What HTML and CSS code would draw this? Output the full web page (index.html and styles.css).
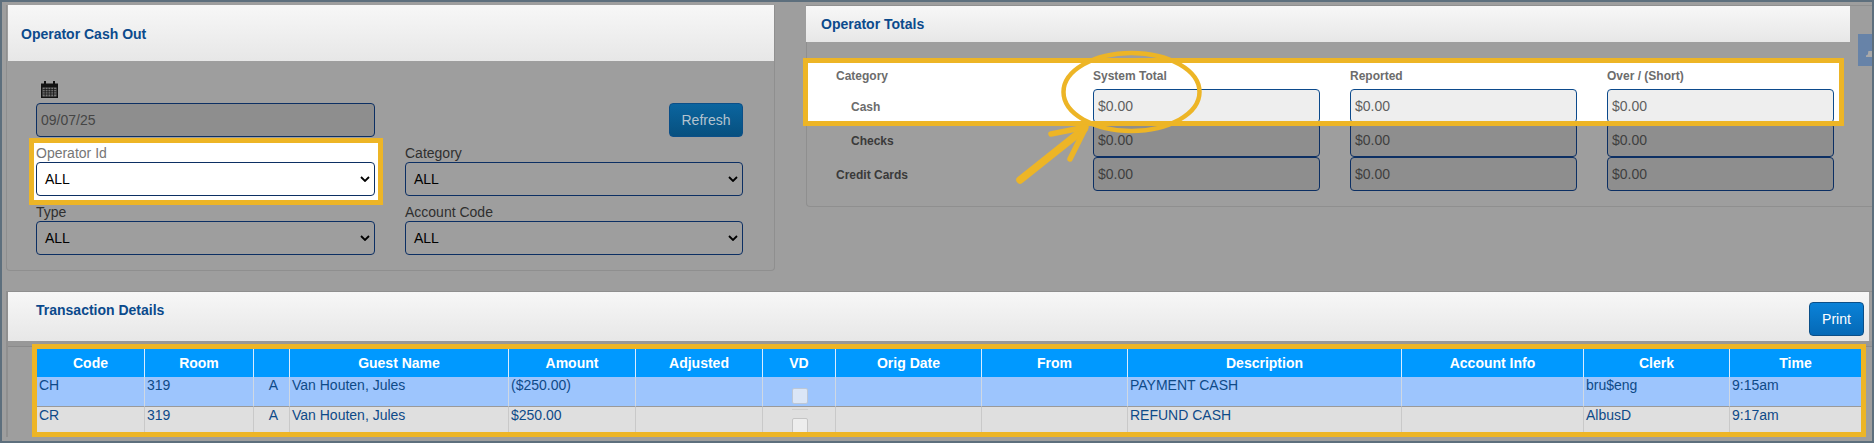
FILE: index.html
```html
<!DOCTYPE html>
<html lang="en">
<head>
<meta charset="utf-8">
<title>Operator Cash Out</title>
<link rel="stylesheet" href="styles.css">
</head>
<body>
<main class="frame">
  <div class="top-row">
    <section class="panel cash-panel">
      <header class="panel-head cash-head"><h2>Operator Cash Out</h2></header>
      <div class="cash-body">
        <div class="date-row">
          <div class="date-field">
            <svg class="cal" viewBox="0 0 17 17" aria-hidden="true">
              <path d="M0 2.5h3V0h2v2.5h7V0h2v2.5h3V17H0z" fill="#111"/>
              <path d="M1.5 6.5h14v9h-14z" fill="#777"/>
              <path d="M1.5 8.6h14M1.5 10.8h14M1.5 13h14M4.2 6.5v9M7 6.5v9M9.8 6.5v9M12.6 6.5v9" stroke="#111" stroke-width=".8" fill="none"/>
            </svg>
            <div class="field-box dim">09/07/25</div>
          </div>
          <button class="btn refresh" type="button">Refresh</button>
        </div>
        <div class="form-grid">
          <div class="field lit"><label>Operator Id</label><div class="select lit-select"><span>ALL</span><svg class="chev" viewBox="0 0 10 6"><path d="M1 1l4 4 4-4" fill="none" stroke="#000" stroke-width="1.8"/></svg></div></div>
          <div class="field"><label>Category</label><div class="select"><span>ALL</span><svg class="chev" viewBox="0 0 10 6"><path d="M1 1l4 4 4-4" fill="none" stroke="#000" stroke-width="1.8"/></svg></div></div>
          <div class="field"><label>Type</label><div class="select"><span>ALL</span><svg class="chev" viewBox="0 0 10 6"><path d="M1 1l4 4 4-4" fill="none" stroke="#000" stroke-width="1.8"/></svg></div></div>
          <div class="field"><label>Account Code</label><div class="select"><span>ALL</span><svg class="chev" viewBox="0 0 10 6"><path d="M1 1l4 4 4-4" fill="none" stroke="#000" stroke-width="1.8"/></svg></div></div>
        </div>
      </div>
    </section>

    <section class="panel totals-panel">
      <header class="panel-head totals-head"><h2>Operator Totals</h2></header>
      <div class="totals-body">
        <div class="totals-lit">
          <div class="t-row t-heads"><b class="t-cat">Category</b><b>System Total</b><b>Reported</b><b>Over / (Short)</b></div>
          <div class="t-row"><b class="t-cat t-sub">Cash</b><div class="t-input on">$0.00</div><div class="t-input on">$0.00</div><div class="t-input on">$0.00</div></div>
        </div>
        <div class="t-row dimrow"><b class="t-cat t-sub">Checks</b><div class="t-input">$0.00</div><div class="t-input">$0.00</div><div class="t-input">$0.00</div></div>
        <div class="t-row dimrow"><b class="t-cat">Credit Cards</b><div class="t-input">$0.00</div><div class="t-input">$0.00</div><div class="t-input">$0.00</div></div>
      </div>
    </section>
    <div class="side-dot"></div>
    <div class="side-tab"></div>
  </div>

  <section class="details">
    <header class="panel-head details-head">
      <h2>Transaction Details</h2>
      <button class="btn print" type="button">Print</button>
    </header>
    <div class="table-zone">
      <div class="table-clip">
        <table class="tx">
          <colgroup>
            <col class="c1"><col class="c2"><col class="c3"><col class="c4"><col class="c5"><col class="c6"><col class="c7"><col class="c8"><col class="c9"><col class="c10"><col class="c11"><col class="c12"><col class="c13">
          </colgroup>
          <thead>
            <tr><th>Code</th><th>Room</th><th></th><th>Guest Name</th><th>Amount</th><th>Adjusted</th><th>VD</th><th>Orig Date</th><th>From</th><th>Description</th><th>Account Info</th><th>Clerk</th><th>Time</th></tr>
          </thead>
          <tbody>
            <tr class="r1"><td>CH</td><td>319</td><td class="ctr">A</td><td>Van Houten, Jules</td><td>($250.00)</td><td></td><td class="vd"><i class="bar"></i><i class="chk"></i></td><td></td><td></td><td>PAYMENT CASH</td><td></td><td>bru$eng</td><td>9:15am</td></tr>
            <tr class="r2"><td>CR</td><td>319</td><td class="ctr">A</td><td>Van Houten, Jules</td><td>$250.00</td><td></td><td class="vd"><i class="bar"></i><i class="chk"></i></td><td></td><td></td><td>REFUND CASH</td><td></td><td>AlbusD</td><td>9:17am</td></tr>
          </tbody>
        </table>
      </div>
    </div>
  </section>

  <svg class="callout" viewBox="0 0 220 160" aria-hidden="true">
    <ellipse cx="131.5" cy="52" rx="68" ry="39" fill="none" stroke="#edb526" stroke-width="4.5"/>
    <path d="M20 140L84 89" fill="none" stroke="#edb526" stroke-width="7.5" stroke-linecap="round"/>
    <path d="M51 94L86 87 70 119" fill="none" stroke="#edb526" stroke-width="5.5" stroke-linecap="round" stroke-linejoin="round"/>
  </svg>
</main>
</body>
</html>
```
FILE: styles.css
```css
* { box-sizing: border-box; }
html, body { margin: 0; height: 100%; overflow: hidden; }
body { background: #9e9e9e; font-family: "Liberation Sans", Arial, sans-serif; color: #3a3a3a; }
h2 { margin: 0; font-size: 14px; line-height: 16px; font-weight: 700; color: #0b4a8c; }

.frame {
  position: relative;
  height: 443px;
  border: 2px solid #5d6f7d;
  overflow: hidden;
}
.top-row { display: flex; height: 289px; position: relative; }

.panel { background: #9e9e9e; border: 1px solid #8f8f8f; border-radius: 0 0 4px 4px; }
.panel-head { background: linear-gradient(#f7f7f7, #e7e7e7); }

.cash-panel { flex: none; width: 769px; height: 266px; margin: 3px 0 0 4px; border-top: 0; }
.cash-head { height: 56px; padding: 21px 12px 0 13px; margin-left: 1px; }
.cash-body { padding: 20px 31px 0 29px; }
.date-row { display: flex; justify-content: space-between; align-items: flex-end; }
.date-field { width: 339px; }
.cal { display: block; width: 17px; height: 17px; margin: 0 0 5px 5px; }
.field-box {
  height: 34px; border: 1px solid #0c2f63; border-radius: 4px;
  display: flex; align-items: center; padding-left: 4px; font-size: 14px;
}
.dim { background: #8e8e8e; color: #454545; }
.btn { border: 1px solid #0b4f88; border-radius: 4px; font: 14px "Liberation Sans", Arial, sans-serif; padding: 0; }
.refresh { width: 74px; height: 34px; background: linear-gradient(#0b659f, #07507f); color: #b4c3cf; }

.form-grid { display: grid; grid-template-columns: 339px 338px; column-gap: 30px; }
.field { height: 59px; padding-top: 5px; }
.field label { display: block; font-size: 14px; height: 20px; line-height: 22px; color: #2f2f2f; }
.field.lit {
  position: relative; background: #fff; outline: 5px solid #edb526;
  margin: 6px -3px -4px -2px; padding: 0 3px 0 2px; height: 57px;
}
.field.lit label { color: #767676; height: 19px; line-height: 21px; }
.select {
  height: 34px; border: 1px solid #0c2f63; border-radius: 4px; display: flex; align-items: center;
  justify-content: space-between; padding: 0 4px 0 8px; font-size: 14px; color: #000;
}
.lit-select { background: #fff; }
.chev { width: 10px; height: 6px; }

.totals-panel { flex: 1; height: 202px; margin: 3px 0 0 31px; border-right: 0; border-radius: 0 0 0 4px; }
.totals-head { height: 36px; padding: 10px 15px 0; width: 1044px; margin-left: -1px; }
.totals-body { padding-top: 21px; }
.totals-lit {
  position: relative; z-index: 1; height: 58px; margin: 0 0 2px 1px; width: 1031px; background: #fff;
  outline: 5px solid #edb526;
}
.t-row { display: grid; grid-template-columns: 255px 227px 227px 227px; column-gap: 30px; height: 34px; }
.t-row b { font-size: 12px; align-self: center; padding-top: 2px; }
.t-heads { height: 25px; align-items: center; color: #6c6c6c; margin-bottom: 1px; }
.t-heads b { padding-top: 0; }
.t-cat { padding-left: 28px; color: #6c6c6c; }
.t-row .t-sub { padding-left: 43px; }
.dimrow { margin-left: 1px; }
.dimrow .t-cat { color: #3a3a3a; }
.t-input {
  height: 34px; border: 1px solid #0c2f63; border-radius: 4px; background: #8e8e8e;
  display: flex; align-items: center; padding-left: 4px; font-size: 14px; color: #3f3f3f;
}
.t-input.on { background: #eee; color: #5f5f5f; border-color: #0c4a8c; }

.side-dot { position: absolute; left: 1865px; top: 24px; width: 48px; height: 48px; border-radius: 50%; background: #123b6b; }
.side-tab { position: absolute; right: 0; top: 32px; width: 14px; height: 32px; background: #6783a8; }
.side-tab::after {
  content: ""; position: absolute; right: 0; bottom: 9px; width: 6px; height: 6px;
  background: #a9a9a9; clip-path: polygon(40% 0, 100% 0, 100% 100%, 0 100%, 0 75%, 30% 60%);
}

.details { margin-left: 4px; border-top: 1px solid #8f8f8f; border-left: 2px solid #8f8f8f; }
.details-head {
  height: 49px; width: 1861px; padding: 10px 5px 0 28px;
  display: flex; justify-content: space-between; align-items: flex-start;
}
.print { width: 55px; height: 34px; background: linear-gradient(#0a82d8, #0569b6); color: #fff; }
.table-zone { padding-top: 3px; background: linear-gradient(#989898 0 5px, #8a8a8a 5px 6px, transparent 6px); }
.table-clip {
  margin-left: 24px; height: 93px; width: 1834px;
  border: 5px solid #edb526; overflow: hidden;
}
.tx { table-layout: fixed; border-collapse: separate; border-spacing: 0; width: 1824px; font-size: 14px; color: #0e4a88; }
.c1 { width: 108px; } .c2 { width: 109px; } .c3 { width: 36px; } .c4 { width: 219px; }
.c5 { width: 127px; } .c6 { width: 127px; } .c7 { width: 73px; } .c8 { width: 146px; }
.c9 { width: 146px; } .c10 { width: 274px; } .c11 { width: 182px; } .c12 { width: 146px; } .c13 { width: 131px; }
.tx th { height: 28px; background: #0099ff; color: #fff; font-size: 14px; font-weight: 700; border-right: 1px solid #d8ecff; padding: 0; }
.tx th:last-child, .tx td:last-child { border-right: 0; }
.tx td { height: 30px; padding: 0 2px; vertical-align: top; line-height: 17px; border-right: 1px solid #c9c9c9; }
.r1 td { background: #9dc5fd; border-bottom: 1px solid #9a9a9a; border-right-color: #cfd8e3; }
.r2 td { background: #dfdfdf; }
.tx .ctr { text-align: center; padding: 0 0 0 4px; }
.tx .vd { padding-left: 3px; }
.bar { display: block; width: 16px; height: 1px; margin: 2px auto 8px; background: #b6c3d3; }
.chk { display: block; width: 16px; height: 16px; margin: 0 auto; background: #dbe6f6; border: 1px solid #bcc7d6; border-radius: 2px; }
.r2 .chk { background: #ededed; border-color: #c4c4c4; }
.r2 .bar { background: #cfcfcf; }

.callout { position: absolute; left: 998px; top: 38px; width: 220px; height: 160px; z-index: 2; }
```
